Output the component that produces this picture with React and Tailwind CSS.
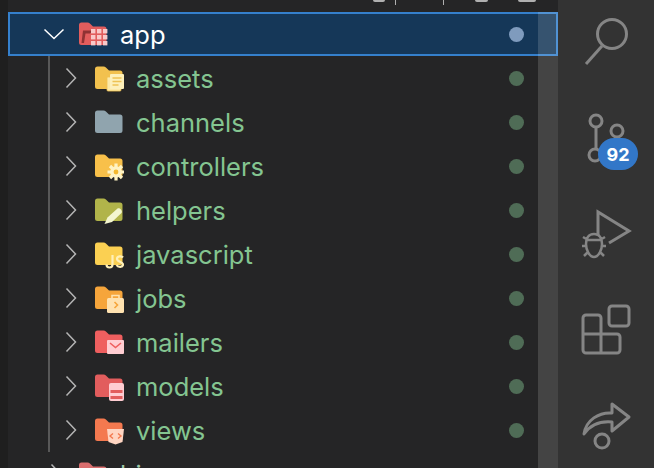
function Folder({ color, children }) {
  return (
    <svg width="32" height="32" viewBox="0 0 32 32" fill="none">
      <path d="M3 7a2.500 2.500 0 0 1 2.500-2.500h6c1 0 1.700.4 2.400 1L17 8.500h11a2.500 2.500 0 0 1 2.500 2.500v13.500A2.500 2.500 0 0 1 28 27H5.500A2.500 2.500 0 0 1 3 24.500z" fill={color} />
      {children}
    </svg>
  );
}

const folders = [
  {
    name: 'assets',
    color: '#f2c14e',
    badge: (
      <g>
        <rect x="15" y="15" width="14" height="14" rx="1" fill="#fbe9a8" stroke="#f2c14e" strokeWidth="0.8" />
        <rect x="18" y="12" width="14" height="15" rx="1" fill="#fdf0bb" />
        <path d="M20.500 16h9M20.500 19.500h9M20.500 23h6" stroke="#eec254" strokeWidth="1.400" />
      </g>
    ),
  },
  { name: 'channels', color: '#90a4ae', badge: null },
  {
    name: 'controllers',
    color: '#f8c04a',
    badge: (
      <g>
        <path d="M24 13.500v17M15.500 22h17M18 16l12 12M30 16 18 28" stroke="#fff3c4" strokeWidth="3.200" />
        <circle cx="24" cy="22" r="5.800" fill="#fff3c4" />
        <circle cx="24" cy="22" r="2.400" fill="#f5b82e" />
      </g>
    ),
  },
  {
    name: 'helpers',
    color: '#b1b44a',
    badge: (
      <path d="M12.500 30l3-6.500 10-9c2-1.500 5.500 2 4 4.500l-9.500 9z" fill="#f4f6d0" />
    ),
  },
  {
    name: 'javascript',
    color: '#fbd052',
    badge: (
      <g stroke="#fff0b8" strokeWidth="2.200" fill="none">
        <path d="M20.500 17v9.500a3 3 0 0 1-6 0" />
        <path d="M31 19.500c-1.500-2-6-1.500-6 1.500s6 2.500 6 5.500-5 3-6.500.5" />
      </g>
    ),
  },
  {
    name: 'jobs',
    color: '#f6a53b',
    badge: (
      <g>
        <path d="M20 17v-3.500h7V17" stroke="#ffe2b0" strokeWidth="1.600" fill="none" />
        <rect x="15" y="16" width="17" height="15" rx="1.500" fill="#ffe2b0" />
        <path d="M22.500 20l3 3-3 3" stroke="#f6a53b" strokeWidth="1.600" fill="none" />
      </g>
    ),
  },
  {
    name: 'mailers',
    color: '#ef5f5f',
    badge: (
      <g>
        <rect x="15" y="14" width="17" height="14" rx="1" fill="#ffcdd2" />
        <path d="M18 17l5.500 4.500L29 17" stroke="#ef5f5f" strokeWidth="1.600" fill="none" />
      </g>
    ),
  },
  {
    name: 'models',
    color: '#e25d5d',
    badge: (
      <g>
        <rect x="17" y="13" width="15" height="18" rx="2" fill="#ffcdd2" />
        <rect x="18.500" y="20" width="12" height="3" fill="#e25d5d" />
        <rect x="18.500" y="26" width="12" height="3" fill="#e25d5d" />
      </g>
    ),
  },
  {
    name: 'views',
    color: '#f4794f',
    badge: (
      <g>
        <path d="M15 15h17l-1.500 13-7 2.500-7-2.500z" fill="#ffd5c2" />
        <path d="M21 19.500l-3 2.500 3 2.500M26 19.500l3 2.500-3 2.500" stroke="#f4794f" strokeWidth="1.400" fill="none" />
      </g>
    ),
  },
];

function Chevron({ className }) {
  return (
    <svg width="12" height="22" viewBox="0 0 12 22" fill="none" className={className}>
      <path d="M1.500 1.500 10.500 11l-9 9.500" stroke="#b4b4b4" strokeWidth="1.500" />
    </svg>
  );
}

function Row({ item }) {
  return (
    <div className="flex items-center h-11 pl-[57px] pr-[34px]">
      <Chevron className="shrink-0" />
      <div className="ml-[15px] w-8 h-8 shrink-0">
        <Folder color={item.color}>{item.badge}</Folder>
      </div>
      <span className="ml-[12px] pt-[2px] flex-1 text-[#84c591] text-[25.5px] leading-none">{item.name}</span>
      <span className="w-[15px] h-[15px] rounded-full bg-[#4f6c56]" />
    </div>
  );
}

function AppFolder() {
  return (
    <svg width="32" height="32" viewBox="0 0 32 32" fill="none">
      <path d="M3 7a2.500 2.500 0 0 1 2.500-2.500h6c1 0 1.700.4 2.400 1L17 8.500h11a2.500 2.500 0 0 1 2.500 2.500v13.500A2.500 2.500 0 0 1 28 27H5.500A2.500 2.500 0 0 1 3 24.500z" fill="#e25d5d" />
      <path d="M5.500 25 7 12.500h10l-3 3H9.500L8 25z" fill="#8f3233" />
      <g fill="#f9c9c9">
        <rect x="15" y="11" width="4.400" height="4.400" />
        <rect x="21" y="11" width="4.400" height="4.400" />
        <rect x="27" y="11" width="4.400" height="4.400" />
        <rect x="15" y="17" width="4.400" height="4.400" />
        <rect x="21" y="17" width="4.400" height="4.400" />
        <rect x="27" y="17" width="4.400" height="4.400" />
        <rect x="15" y="23" width="4.400" height="4.400" />
        <rect x="21" y="23" width="4.400" height="4.400" />
        <rect x="27" y="23" width="4.400" height="4.400" />
      </g>
    </svg>
  );
}

function BarIcon({ children, badge }) {
  return (
    <div className="relative w-24 h-24 shrink-0">
      <svg width="96" height="96" viewBox="0 0 96 96" fill="none" stroke="#858585" strokeWidth="3">
        {children}
      </svg>
      {badge && (
        <span className="absolute left-[40px] top-[50px] w-10 h-8 rounded-full bg-[#3277c8] text-white text-[18px] font-bold flex items-center justify-center">
          {badge}
        </span>
      )}
    </div>
  );
}

export default function App() {
  return (
    <div className="w-[654px] h-[468px] overflow-hidden flex bg-[#252526] font-['Inter',sans-serif]">
      <div className="w-[8px] bg-[#1f1f1f] shrink-0" />
      <div className="relative w-[550px] flex flex-col shrink-0">
        {/* clipped toolbar icons at the top edge */}
        <div className="h-3 shrink-0 flex items-start pl-[365px] gap-[10px]">
          <span className="w-3 h-[2px] bg-[#b0b0b0] rounded-b-sm" />
          <span className="w-px h-[5px] bg-[#b0b0b0]" />
          <span className="ml-[37px] w-px h-[5px] bg-[#b0b0b0]" />
          <span className="ml-[21px] w-[13px] h-[2px] bg-[#b0b0b0] rounded-b-full" />
          <span className="ml-[20px] w-[18px] h-[2px] bg-[#b0b0b0] rounded-b-sm" />
        </div>
        <div className="h-11 shrink-0 flex items-center border-2 border-[#3580cc] bg-[#153758] pl-[33px] pr-[32px]">
          <svg width="22" height="12" viewBox="0 0 22 12" fill="none" className="shrink-0">
            <path d="M1.500 1.500 11 10.500l9.500-9" stroke="#ffffff" strokeWidth="1.500" />
          </svg>
          <div className="ml-[11px] w-8 h-8 shrink-0">
            <AppFolder />
          </div>
          <span className="ml-[12px] pt-[2px] flex-1 text-white text-[25.5px] leading-none">app</span>
          <span className="w-[15px] h-[15px] rounded-full bg-[#7f9bbd]" />
        </div>
        <div className="relative">
          <div className="absolute left-[40px] top-0 bottom-0 w-[2px] bg-[#585858]" />
          {folders.map((item) => (
            <Row key={item.name} item={item} />
          ))}
        </div>
        <div className="flex items-center h-11 shrink-0 pl-[42px]">
          <Chevron className="shrink-0" />
          <div className="ml-[14px] w-8 h-8 shrink-0">
            <Folder color="#d96e6e" />
          </div>
          <span className="ml-[12px] pt-[2px] text-[#9ec7a6] text-[25.5px] leading-none">bin</span>
        </div>
        <div className="absolute right-0 top-3 bottom-0 w-[20px] bg-white/[.14]" />
      </div>
      <div className="flex-1 flex flex-col bg-[#333333] -mt-2 border-r border-[#3f3f3f]">
        <BarIcon>
          <circle cx="54" cy="42" r="14.500" />
          <path d="M44 54 28 72" />
        </BarIcon>
        <BarIcon badge="92">
          <circle cx="38" cy="33" r="6" />
          <circle cx="59" cy="43" r="6" />
          <circle cx="37" cy="67" r="6" />
          <path d="M38 39v22M59 49c0 7-11 7-17 13" />
        </BarIcon>
        <BarIcon>
          <path d="M40 52V28l31 19-20 12" />
          <path d="M36 50c-6 0-8 5-8 10s3 13 8 13 8-8 8-13-2-10-8-10zM28 56h16M25 53l5 3M47 53l-5 3M24 62h5M48 62h-5M26 72l4-4M46 72l-4-4" strokeWidth="2.500" />
        </BarIcon>
        <BarIcon>
          <rect x="51" y="26" width="20" height="20" rx="3" />
          <path d="M43 54V38a3 3 0 0 0-3-3H28a3 3 0 0 0-3 3v32a3 3 0 0 0 3 3h31a3 3 0 0 0 3-3V57a3 3 0 0 0-3-3H25M43 54v19" />
        </BarIcon>
        <BarIcon>
          <path d="M26 58c2-14 15-22 28-21V28l17 13-17 14v-9c-11-1-21 2-28 12z" strokeLinejoin="round" />
          <circle cx="44" cy="65" r="7" />
        </BarIcon>
      </div>
    </div>
  );
}
